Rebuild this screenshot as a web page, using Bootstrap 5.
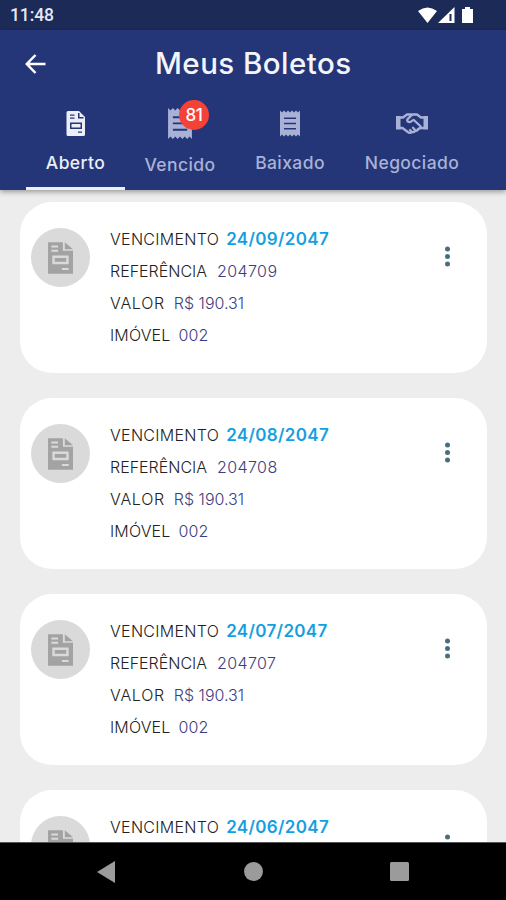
<!DOCTYPE html>
<html lang="pt-BR">
<head>
<meta charset="utf-8">
<meta name="viewport" content="width=device-width, initial-scale=1">
<title>Meus Boletos</title>
<link href="https://cdn.jsdelivr.net/npm/bootstrap@5.3.0/dist/css/bootstrap.min.css" rel="stylesheet">
<style>
body{font-family:Inter,"Open Sans",sans-serif;background:#ededed;line-height:1}
.screen{height:900px;width:506px}
svg{display:block;flex:none}
.status{height:30px;background:#1c2a58;color:#fff;font-family:Roboto,sans-serif;font-size:17.5px;font-weight:500;padding:2px 32px 0 10px}
.status-time{color:#e6e8f0;letter-spacing:-.1px}
.app-head{background:#243678;height:160px;box-shadow:0 2px 5px rgba(0,0,0,.35);z-index:2}
.titlebar{height:68px;padding-left:25px}
.titlebar h1{font-size:29.5px;font-weight:500;color:#f4f5fb;letter-spacing:.45px;margin-left:109px}
.tab-strip{height:92px;padding-left:26px;color:#a9b2d6}
.tab-item{font-size:17.5px;font-weight:500;letter-spacing:.4px;border-bottom:3px solid transparent;padding-top:12px}
.tab-item.active{color:#eceef8;border-color:#eceef8}
.tab-item svg{height:27px}
.tab-item span{margin-top:17px;white-space:nowrap}
.t1{width:99px}.t2{width:110px}.t3{width:110px}.t4{width:134px}
.tab-item.t2{padding-top:10px}
.tab-item.t2 svg{height:31px}
.t2 span{margin-top:17px}
.count{left:54px;top:2px;width:30px;height:30px;background:#f44336;color:#fff;font-size:17px;letter-spacing:-.3px}
.bills{padding:12px 19px 0 20px;gap:25px}
.bill{height:171px;border-radius:32px;background:#fff;padding:21px 33px 0 11px;flex:none}
.bill-cut{height:80px;border-radius:32px 32px 0 0}
.avatar{width:59px;height:59px;background:#dadada;margin-top:5px}
.rows{margin-left:20px;font-size:16px;font-weight:300;color:#222}
.rows>div{height:32px;line-height:32.500px;white-space:nowrap}
.rows b{font-weight:300;color:#3d3d80;margin-left:8px}
.r-due{letter-spacing:.3px}
.r-ref b{letter-spacing:.4px;margin-left:10px}
.r-val{letter-spacing:.7px}
.r-val b{letter-spacing:0;margin-left:9px}
.r-imo{letter-spacing:.15px}
.rows .due{font-weight:600;color:#169fe0;font-size:17px;letter-spacing:.33px;margin-left:7px}
.menu-dots{margin-top:23px}
.sysnav{height:58px;background:#000;z-index:3;border-top:1px solid #555;padding:0 97px}
</style>
</head>
<body>
<svg class="d-none"><defs>
<symbol id="doc" viewBox="0 0 26 33"><path fill-rule="evenodd" d="M0 0h15.500v9H26v24H0zM3.500 3.500v2h7v-2zM3.500 8v2h7v-2zM4.500 14v9h17v-9zM14.500 27v2h7v-2zM17.500 0L26 7.500h-8.500zM7 16.500h12v4H7z"/></symbol>
<symbol id="receipt" viewBox="0 0 20 26"><path fill-rule="evenodd" d="M0 0l2 2 2-2 2 2 2-2 2 2 2-2 2 2 2-2 2 2 2-2v26l-2-2-2 2-2-2-2 2-2-2-2 2-2-2-2 2-2-2-2 2zM4 7v1.500h12V7zM4 12.200v1.500h12v-1.500zM4 17.500V19h12v-1.500z"/></symbol>
</defs></svg>
<div class="screen d-flex flex-column overflow-hidden">
<div class="status d-flex align-items-center justify-content-between flex-shrink-0"><span class="status-time">11:48</span>
<svg width="56" height="18" fill="#fff"><path d="M0 4Q9.500-3 19 4L9.500 16zM36.500 0v16H20zM44 2h3V0h5v2h3v14H44z"/><path d="M32.500 7v7" stroke="#1c2a58" stroke-width="2"/></svg></div>
<header class="app-head flex-shrink-0 position-relative">
<div class="titlebar d-flex align-items-center"><svg width="21" height="20" fill="none" stroke="#fff" stroke-width="2.500"><path d="M20.500 10H2M10.500 1L1.800 10l8.700 9"/></svg><h1 class="mb-0">Meus Boletos</h1></div>
<nav class="tab-strip d-flex">
<div class="tab-item t1 active d-flex flex-column align-items-center"><svg width="20" viewBox="0 0 20 27" fill="currentColor"><path fill-rule="evenodd" d="M2 1h11l6 6v17.500q0 1.500-1.500 1.500H2q-1.500 0-1.500-1.500V2.500Q.5 1 2 1zM4 4.500v1.300h4.500V4.500zM4 7.500v1.300h4.500V7.500zM12 3v5.500h5.500V7H13.500V3zM4 12.500V19h12v-6.500zM5.500 14h9v3.500h-9zM12 21.500v1.300h4v-1.300z"/></svg><span>Aberto</span></div>
<div class="tab-item t2 d-flex flex-column align-items-center position-relative"><svg width="24" fill="currentColor"><use href="#receipt"/></svg><span>Vencido</span><em class="count fst-normal rounded-circle position-absolute d-flex align-items-center justify-content-center">81</em></div>
<div class="tab-item t3 d-flex flex-column align-items-center"><svg width="20" fill="currentColor"><use href="#receipt"/></svg><span>Baixado</span></div>
<div class="tab-item t4 d-flex flex-column align-items-center"><svg width="32" viewBox="0 0 32 27" fill="none" stroke="currentColor" stroke-width="2.300" stroke-linejoin="round" stroke-linecap="round"><path d="M0 6h4.500v13.500H0zM27.500 6H32v13.500h-4.500z" fill="currentColor" stroke="none"/><path d="M4 7.500h3L11 4.500h4.500M4 18h2.500l6 4.500q2 1 3.500-.5 2 .6 3.200-1.200 2.300.2 3-1.800L24 18h4M28 7.500h-3l-4-3h-4.500l-5 4.700q-.8 2 1 2.800 2 .5 3.800-1.500l1.500-.5 6.500 6q.8 1.500-1 2.700M16 22l-2-2M19.500 20.500l-2.500-2.700"/></svg><span>Negociado</span></div>
</nav></header>
<main class="bills d-flex flex-column flex-grow-1 overflow-hidden" id="bills"></main>
<div class="sysnav flex-shrink-0 d-flex align-items-center justify-content-between"><svg width="18" height="22" fill="#9b9b9b"><path d="M18 0v22L0 11z"/></svg><svg width="20" height="19" fill="#9b9b9b"><circle cx="10.500" cy="9.500" r="9.500"/></svg><svg width="19" height="19" fill="#9b9b9b"><rect width="19" height="19" rx="1.500"/></svg></div>
</div>
<script>
const details = m => `<div class="r-ref">REFERÊNCIA<b>2047${m}</b></div><div class="r-val">VALOR<b>R$ 190.31</b></div><div class="r-imo">IMÓVEL<b>002</b></div>`;
document.getElementById('bills').innerHTML=['09','08','07','06'].map((m,i)=>`<article class="bill d-flex align-items-start ${i===3?'bill-cut':''}"><div class="avatar rounded-circle d-flex align-items-center justify-content-center flex-shrink-0"><svg width="25" height="32" fill="#a3a3a3"><use href="#doc"/></svg></div><div class="rows flex-grow-1"><div class="r-due">VENCIMENTO<b class="due">24/${m}/2047</b></div>${i<3?details(m):''}</div><svg class="menu-dots" width="13" height="21" fill="#4a6e7e"><circle cx="6.500" cy="3" r="2.500"/><circle cx="6.500" cy="10.500" r="2.500"/><circle cx="6.500" cy="18" r="2.500"/></svg></article>`).join('');
</script>
<script src="https://cdn.jsdelivr.net/npm/bootstrap@5.3.0/dist/js/bootstrap.bundle.min.js"></script>
</body>
</html>
